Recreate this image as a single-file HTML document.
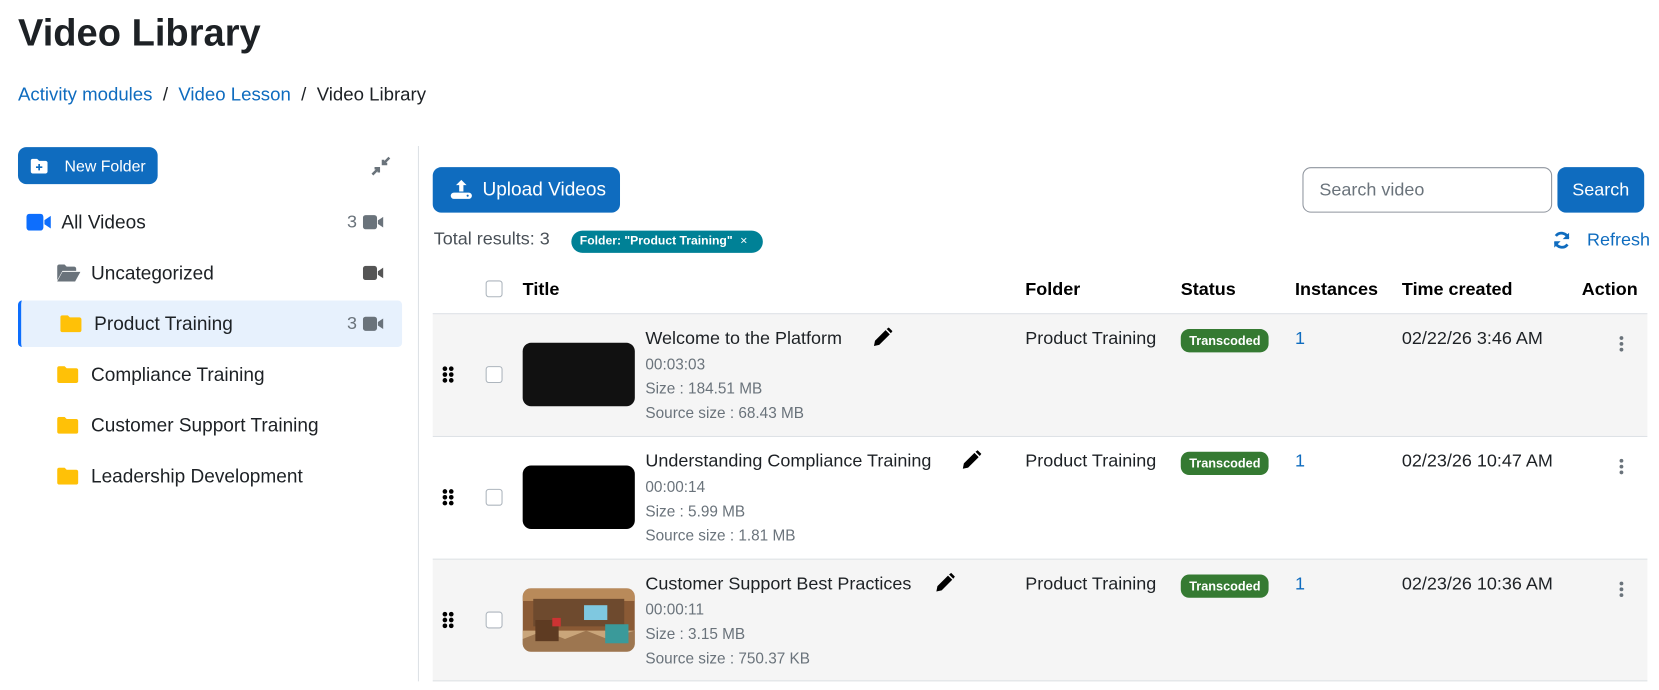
<!DOCTYPE html>
<html><head><meta charset="utf-8"><style>
*{box-sizing:border-box;margin:0;padding:0}
body{width:1659px;height:689px;background:#fff;font-family:"Liberation Sans",sans-serif;color:#1d2125;position:relative;overflow:hidden}
#w{position:absolute;left:0;top:0;width:1568px;height:652px;transform:scale(1.05804);transform-origin:0 0}
.a{position:absolute;white-space:nowrap}
h1{position:absolute;left:17px;top:10px;font-size:36px;font-weight:bold;color:#1d2125}
.lnk{color:#0f6cbf}
.btn{background:#0f6cbf;color:#fff;border-radius:8px;position:absolute}
.side{font-size:18px;color:#1d2125}
.cnt{color:#6a737b;font-size:17px}
.hd{font-weight:bold;font-size:17px;color:#000}
.row{position:absolute;left:409px;width:1148px;height:116px;border-top:1px solid #dee2e6}
.cb{position:absolute;width:16px;height:16px;border:1px solid #adb5bd;border-radius:3px;background:#fff}
.t{font-size:17px;color:#1d2125}
.t.lnk{color:#0f6cbf}
.s{font-size:14.5px;color:#6a737b}
.badge{position:absolute;background:#357a32;color:#fff;font-weight:bold;font-size:12px;border-radius:8px;padding:4px 8px;line-height:14px}
</style></head><body><div id="w">
<h1>Video Library</h1>
<div class="a" style="left:17px;top:79px;font-size:17.6px;color:#1d2125"><span class="lnk">Activity modules</span> &nbsp;/&nbsp; <span class="lnk">Video Lesson</span> &nbsp;/&nbsp; Video Library</div>

<div class="btn" style="left:17px;top:139px;width:132px;height:35px"></div>
<svg class="a" style="left:29px;top:150px" width="16" height="14" viewBox="0 0 16 14"><path d="M0 2a2 2 0 0 1 2-2h4l2 2h6a2 2 0 0 1 2 2v8a2 2 0 0 1-2 2H2a2 2 0 0 1-2-2z" fill="#fff"/><path d="M8 5v6M5 8h6" stroke="#0f6cbf" stroke-width="1.6"/></svg>
<div class="a" style="left:61px;top:149px;font-size:15px;color:#fff">New Folder</div>
<svg class="a" style="left:350px;top:147px" width="20" height="20" viewBox="0 0 20 20"><path d="M18 2l-6 6M12 4v4h4M2 18l6-6M4 12h4v4" stroke="#6a737b" stroke-width="2.4" fill="none"/></svg>

<svg class="a" style="left:25px;top:202px" width="24" height="16" viewBox="0 0 24 16"><rect x="0" y="0" width="16" height="16" rx="3" fill="#0d6efd"/><path d="M17 6l6-4v12l-6-4z" fill="#0d6efd"/></svg>
<div class="a side" style="left:58px;top:200px">All Videos</div>
<div class="a cnt" style="left:328px;top:200px">3</div>
<svg class="a" style="left:343px;top:203px" width="20" height="14" viewBox="0 0 24 16"><rect width="16" height="16" rx="3" fill="#6a737b"/><path d="M17 6l6-4v12l-6-4z" fill="#6a737b"/></svg>

<svg class="a" style="left:54px;top:250px" width="22" height="16" viewBox="0 0 22 16"><path d="M0 2a2 2 0 0 1 2-2h5l2 2h7a2 2 0 0 1 2 2v2H5L0 15z" fill="#6a737b"/><path d="M5 7h17l-5 9H0z" fill="#6a737b"/></svg>
<div class="a side" style="left:86px;top:248px">Uncategorized</div>
<svg class="a" style="left:343px;top:251px" width="20" height="14" viewBox="0 0 24 16"><rect width="16" height="16" rx="3" fill="#555"/><path d="M17 6l6-4v12l-6-4z" fill="#555"/></svg>

<div class="a" style="left:17px;top:284px;width:363px;height:44px;background:#e7f1fd;border-left:3px solid #0d6efd;border-radius:4px"></div>
<svg class="a" style="left:57px;top:298px" width="20" height="16" viewBox="0 0 20 16"><path d="M0 2a2 2 0 0 1 2-2h5l2 2h9a2 2 0 0 1 2 2v10a2 2 0 0 1-2 2H2a2 2 0 0 1-2-2z" fill="#ffc107"/></svg>
<div class="a side" style="left:89px;top:296px">Product Training</div>
<div class="a cnt" style="left:328px;top:296px">3</div>
<svg class="a" style="left:343px;top:299px" width="20" height="14" viewBox="0 0 24 16"><rect width="16" height="16" rx="3" fill="#6a737b"/><path d="M17 6l6-4v12l-6-4z" fill="#6a737b"/></svg>

<svg class="a" style="left:54px;top:346px" width="20" height="16" viewBox="0 0 20 16"><path d="M0 2a2 2 0 0 1 2-2h5l2 2h9a2 2 0 0 1 2 2v10a2 2 0 0 1-2 2H2a2 2 0 0 1-2-2z" fill="#ffc107"/></svg>
<div class="a side" style="left:86px;top:344px">Compliance Training</div>
<svg class="a" style="left:54px;top:394px" width="20" height="16" viewBox="0 0 20 16"><path d="M0 2a2 2 0 0 1 2-2h5l2 2h9a2 2 0 0 1 2 2v10a2 2 0 0 1-2 2H2a2 2 0 0 1-2-2z" fill="#ffc107"/></svg>
<div class="a side" style="left:86px;top:392px">Customer Support Training</div>
<svg class="a" style="left:54px;top:442px" width="20" height="16" viewBox="0 0 20 16"><path d="M0 2a2 2 0 0 1 2-2h5l2 2h9a2 2 0 0 1 2 2v10a2 2 0 0 1-2 2H2a2 2 0 0 1-2-2z" fill="#ffc107"/></svg>
<div class="a side" style="left:86px;top:440px">Leadership Development</div>

<div class="a" style="left:395px;top:138px;width:1px;height:506px;background:#dee2e6"></div>

<div class="btn" style="left:409px;top:158px;width:177px;height:43px"></div>
<svg class="a" style="left:425px;top:169px" width="22" height="20" viewBox="0 0 22 20"><path d="M11 1l-5 5h3v6h4V6h3z" fill="#fff"/><rect x="1" y="13" width="20" height="6" rx="3" fill="#fff"/><circle cx="17" cy="16" r="1" fill="#0f6cbf"/></svg>
<div class="a" style="left:456px;top:169px;font-size:18px;color:#fff">Upload Videos</div>

<div class="a" style="left:1231px;top:158px;width:236px;height:43px;border:1px solid #8f959e;border-radius:8px"></div>
<div class="a" style="left:1247px;top:170px;font-size:17px;color:#6a737b">Search video</div>
<div class="btn" style="left:1472px;top:158px;width:82px;height:43px"></div>
<div class="a" style="left:1486px;top:170px;font-size:17px;color:#fff">Search</div>

<div class="a" style="left:410px;top:216px;font-size:17px;color:#495057">Total results: 3</div>
<div class="a" style="left:540px;top:218px;width:181px;height:21px;background:#008196;border-radius:11px"></div>
<div class="a" style="left:548px;top:222px;font-size:11.5px;font-weight:bold;color:#fff">Folder: "Product Training" <span style="font-weight:normal;margin-left:4px">×</span></div>

<svg class="a" style="left:1467px;top:218px" width="18" height="18" viewBox="0 0 18 18"><path d="M15 7A6.5 6.5 0 0 0 3.5 5M3 11a6.5 6.5 0 0 0 11.5 2" stroke="#0f6cbf" stroke-width="2.6" fill="none"/><path d="M16 2v6h-6zM2 16v-6h6z" fill="#0f6cbf"/></svg>
<div class="a lnk" style="left:1500px;top:217px;font-size:17px">Refresh</div>

<div class="cb" style="left:459px;top:265px"></div>
<div class="a hd" style="left:494px;top:264px">Title</div>
<div class="a hd" style="left:969px;top:264px">Folder</div>
<div class="a hd" style="left:1116px;top:264px">Status</div>
<div class="a hd" style="left:1224px;top:264px">Instances</div>
<div class="a hd" style="left:1325px;top:264px">Time created</div>
<div class="a hd" style="left:1495px;top:264px">Action</div>

<div class="row" style="top:296px;background:#f5f5f5"></div>
<div class="row" style="top:412px;background:#fff"></div>
<div class="row" style="top:528px;background:#f5f5f5;border-bottom:1px solid #dee2e6"></div>

<!-- row 1 -->
<svg class="a" style="left:418px;top:346px" width="12" height="16"><g fill="#000"><circle cx="2.5" cy="2.5" r="2.2"/><circle cx="8.5" cy="2.5" r="2.2"/><circle cx="2.5" cy="8" r="2.2"/><circle cx="8.5" cy="8" r="2.2"/><circle cx="2.5" cy="13.5" r="2.2"/><circle cx="8.5" cy="13.5" r="2.2"/></g></svg>
<div class="cb" style="left:459px;top:346px"></div>
<div class="a" style="left:494px;top:324px;width:106px;height:60px;background:#111;border-radius:8px"></div>
<div class="a t" style="left:610px;top:310px">Welcome to the Platform</div>
<svg class="a" style="left:824px;top:309px" width="20" height="20" viewBox="0 0 20 20"><path d="M2 18l1-5L13 3l4 4L7 17z M14 2l2-1.5 3.5 3.5L18 6z" fill="#000"/></svg>
<div class="a s" style="left:610px;top:337px">00:03:03</div>
<div class="a s" style="left:610px;top:360px">Size : 184.51 MB</div>
<div class="a s" style="left:610px;top:383px">Source size : 68.43 MB</div>
<div class="a t" style="left:969px;top:310px">Product Training</div>
<div class="badge" style="left:1116px;top:311px">Transcoded</div>
<div class="a t lnk" style="left:1224px;top:310px">1</div>
<div class="a t" style="left:1325px;top:310px">02/22/26 3:46 AM</div>
<svg class="a" style="left:1530px;top:317px" width="5" height="16"><g fill="#6a737b"><circle cx="2.5" cy="2.5" r="1.8"/><circle cx="2.5" cy="8" r="1.8"/><circle cx="2.5" cy="13.5" r="1.8"/></g></svg>

<!-- row 2 -->
<svg class="a" style="left:418px;top:462px" width="12" height="16"><g fill="#000"><circle cx="2.5" cy="2.5" r="2.2"/><circle cx="8.5" cy="2.5" r="2.2"/><circle cx="2.5" cy="8" r="2.2"/><circle cx="8.5" cy="8" r="2.2"/><circle cx="2.5" cy="13.5" r="2.2"/><circle cx="8.5" cy="13.5" r="2.2"/></g></svg>
<div class="cb" style="left:459px;top:462px"></div>
<div class="a" style="left:494px;top:440px;width:106px;height:60px;background:#000;border-radius:8px"></div>
<div class="a t" style="left:610px;top:426px">Understanding Compliance Training</div>
<svg class="a" style="left:908px;top:425px" width="20" height="20" viewBox="0 0 20 20"><path d="M2 18l1-5L13 3l4 4L7 17z M14 2l2-1.5 3.5 3.5L18 6z" fill="#000"/></svg>
<div class="a s" style="left:610px;top:453px">00:00:14</div>
<div class="a s" style="left:610px;top:476px">Size : 5.99 MB</div>
<div class="a s" style="left:610px;top:499px">Source size : 1.81 MB</div>
<div class="a t" style="left:969px;top:426px">Product Training</div>
<div class="badge" style="left:1116px;top:427px">Transcoded</div>
<div class="a t lnk" style="left:1224px;top:426px">1</div>
<div class="a t" style="left:1325px;top:426px">02/23/26 10:47 AM</div>
<svg class="a" style="left:1530px;top:433px" width="5" height="16"><g fill="#6a737b"><circle cx="2.5" cy="2.5" r="1.8"/><circle cx="2.5" cy="8" r="1.8"/><circle cx="2.5" cy="13.5" r="1.8"/></g></svg>

<!-- row 3 -->
<svg class="a" style="left:418px;top:578px" width="12" height="16"><g fill="#000"><circle cx="2.5" cy="2.5" r="2.2"/><circle cx="8.5" cy="2.5" r="2.2"/><circle cx="2.5" cy="8" r="2.2"/><circle cx="8.5" cy="8" r="2.2"/><circle cx="2.5" cy="13.5" r="2.2"/><circle cx="8.5" cy="13.5" r="2.2"/></g></svg>
<div class="cb" style="left:459px;top:578px"></div>
<svg class="a" style="left:494px;top:556px" width="106" height="60" viewBox="0 0 106 60"><defs><clipPath id="c"><rect width="106" height="60" rx="8"/></clipPath></defs><g clip-path="url(#c)"><rect width="106" height="60" fill="#8a5a35"/><rect y="0" width="106" height="12" fill="#b98a5a"/><rect x="10" y="10" width="86" height="26" fill="#6e4a2e"/><rect x="58" y="16" width="22" height="14" fill="#7fc8e0"/><path d="M0 40h106v20H0z" fill="#c9a57a"/><path d="M0 48l20-8 20 8 20-8 20 8 26-8v20H0z" fill="#9d7650"/><rect x="12" y="30" width="22" height="20" fill="#5e3b22"/><rect x="78" y="34" width="22" height="18" fill="#3a9a9a"/><rect x="28" y="28" width="8" height="8" fill="#c33"/></g></svg>
<div class="a t" style="left:610px;top:542px">Customer Support Best Practices</div>
<svg class="a" style="left:883px;top:541px" width="20" height="20" viewBox="0 0 20 20"><path d="M2 18l1-5L13 3l4 4L7 17z M14 2l2-1.5 3.5 3.5L18 6z" fill="#000"/></svg>
<div class="a s" style="left:610px;top:569px">00:00:11</div>
<div class="a s" style="left:610px;top:592px">Size : 3.15 MB</div>
<div class="a s" style="left:610px;top:615px">Source size : 750.37 KB</div>
<div class="a t" style="left:969px;top:542px">Product Training</div>
<div class="badge" style="left:1116px;top:543px">Transcoded</div>
<div class="a t lnk" style="left:1224px;top:542px">1</div>
<div class="a t" style="left:1325px;top:542px">02/23/26 10:36 AM</div>
<svg class="a" style="left:1530px;top:549px" width="5" height="16"><g fill="#6a737b"><circle cx="2.5" cy="2.5" r="1.8"/><circle cx="2.5" cy="8" r="1.8"/><circle cx="2.5" cy="13.5" r="1.8"/></g></svg>
</div></body></html>
